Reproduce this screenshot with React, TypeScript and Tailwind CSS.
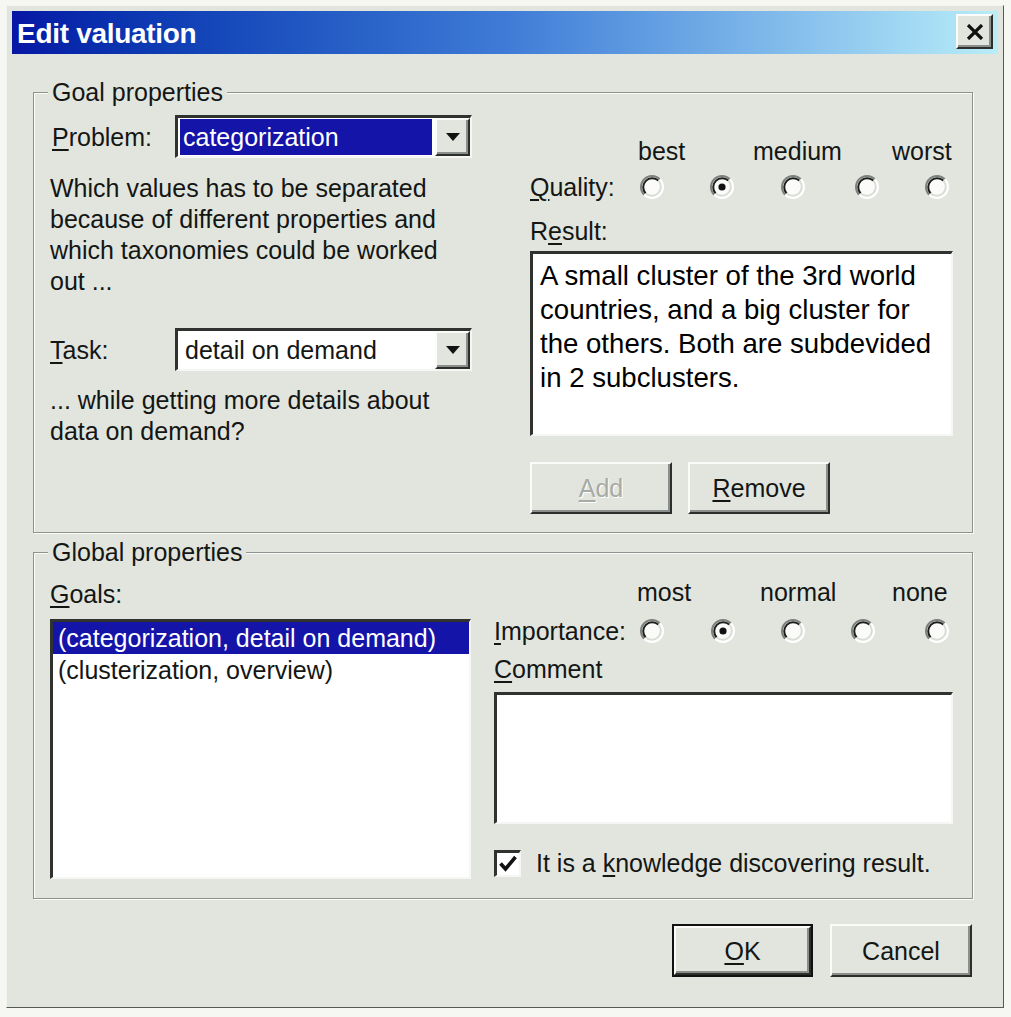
import React from 'react'

// classic win9x dialog, scaled up ~2.4x

const raised =
  'border-[2px] border-t-[#fbfcfa] border-l-[#fbfcfa] border-r-[#2c2e2c] border-b-[#2c2e2c] shadow-[inset_-2px_-2px_0_#8b8f8b] bg-[#e1e5de]'
const sunken =
  'border-t-[3px] border-l-[3px] border-r-[2px] border-b-[2px] border-t-[#2f322f] border-l-[#2f322f] border-r-[#f6f7f4] border-b-[#f6f7f4] bg-white'

function U({ children }: { children: React.ReactNode }) {
  return <span className="underline decoration-[2px] underline-offset-[3px]">{children}</span>
}

function Radio({ checked = false }: { checked?: boolean }) {
  return (
    <svg width="24" height="24" viewBox="0 0 24 24">
      <circle cx="12" cy="12" r="10.5" fill="#fbfcfa" />
      <path d="M4.22 19.78 A11 11 0 0 1 19.78 4.22" stroke="#7d817d" strokeWidth="2" fill="none" />
      <path d="M5.64 18.36 A9 9 0 0 1 18.36 5.64" stroke="#1c1e1c" strokeWidth="2" fill="none" />
      <path d="M19.78 4.22 A11 11 0 0 1 4.22 19.78" stroke="#ffffff" strokeWidth="2" fill="none" />
      <path d="M18.36 5.64 A9 9 0 0 1 5.64 18.36" stroke="#d9ddd6" strokeWidth="2" fill="none" />
      {checked && <circle cx="12" cy="12" r="3.6" fill="#111" />}
    </svg>
  )
}

function Arrow() {
  return (
    <svg width="16" height="10" viewBox="0 0 16 10">
      <path d="M1 1 H15 L8 9 Z" fill="#111" />
    </svg>
  )
}

function Combo({ value, selected = false }: { value: string; selected?: boolean }) {
  return (
    <div className={`flex h-[43px] w-[297px] ${sunken}`}>
      <div className="flex flex-1 py-[1px] pl-[2px] pr-[3px]">
        {selected ? (
          <div className="flex w-full items-center bg-[#1414a8] pl-[3px] text-white">{value}</div>
        ) : (
          <div className="flex w-full items-center pl-[5px]">{value}</div>
        )}
      </div>
      <div className={`flex w-[35px] items-center justify-center ${raised}`}>
        <Arrow />
      </div>
    </div>
  )
}

function GroupBox({ title, className, children }: { title: string; className: string; children: React.ReactNode }) {
  return (
    <div className={`border border-[#8d928d] shadow-[inset_1px_1px_0_#fbfcfa,1px_1px_0_#fbfcfa] ${className}`}>
      <div className="-mt-[15px] ml-[14px] w-fit bg-[#e1e5de] px-[4px]">{title}</div>
      {children}
    </div>
  )
}

export default function App() {
  return (
    <div className="h-[1017px] w-[1011px] bg-[#f6f7f3] pl-[6px] pt-[5px] font-['Liberation_Sans',Arial,sans-serif] text-[25px] leading-[28px] text-[#141614]">
      <div className="h-[1003px] w-[998px] border border-b-[#565a56] border-l-[#f2f4f0] border-r-[#565a56] border-t-[#f2f4f0] bg-[#e1e5de] p-[5px]">
        {/* title bar */}
        <div className="flex h-[43px] items-start justify-between bg-linear-to-r from-[#0816a4] via-[#3f7bd6] to-[#b9edf8] pl-[5px] pr-[5px] pt-[3px]">
          <span className="mt-[5px] text-[28px] font-bold leading-[30px] tracking-[-0.3px] text-white">Edit valuation</span>
          <div className={`flex h-[35px] w-[37px] items-center justify-center ${raised}`}>
            <svg width="20" height="16" viewBox="0 0 20 16">
              <path d="M3 1 L17 15 M17 1 L3 15" stroke="#111" strokeWidth="3.2" />
            </svg>
          </div>
        </div>

        <div className="pl-[21px] pr-[25px] pt-[38px]">
          {/* Goal properties */}
          <GroupBox title="Goal properties" className="h-[441px]">
            <div className="flex gap-[58px] pl-[16px]">
              <div className="w-[422px]">
                <div className="mt-[9px] flex items-center">
                  <span className="w-[125px] pl-[2px]">
                    <U>P</U>roblem:
                  </span>
                  <Combo value="categorization" selected />
                </div>
                <p className="mt-[15px] leading-[31px]">
                  Which values has to be separated
                  <br />
                  because of different properties and
                  <br />
                  which taxonomies could be worked
                  <br />
                  out ...
                </p>
                <div className="mt-[31px] flex items-center">
                  <span className="w-[125px]">
                    <U>T</U>ask:
                  </span>
                  <Combo value="detail on demand" />
                </div>
                <p className="mt-[14px] leading-[31px]">
                  ... while getting more details about
                  <br />
                  data on demand?
                </p>
              </div>

              <div className="w-[423px]">
                <div className="mt-[31px] grid h-[28px] grid-cols-[108px_115px_139px_1fr]">
                  <span />
                  <span>best</span>
                  <span>medium</span>
                  <span>worst</span>
                </div>
                <div className="mt-[8px] grid h-[28px] grid-cols-[110px_70px_71px_74px_70px_28px] items-center">
                  <span>
                    <U>Q</U>uality:
                  </span>
                  <Radio />
                  <Radio checked />
                  <Radio />
                  <Radio />
                  <Radio />
                </div>
                <div className="mt-[16px]">
                  R<U>e</U>sult:
                </div>
                <div className={`mt-[6px] h-[185px] w-[423px] pl-[7px] pt-[5px] text-[27.6px] leading-[34px] text-black ${sunken}`}>
                  A small cluster of the 3rd world
                  <br />
                  countries, and a big cluster for
                  <br />
                  the others. Both are subdevided
                  <br />
                  in 2 subclusters.
                </div>
                <div className="mt-[26px] flex gap-[16px]">
                  <div className={`flex h-[52px] w-[142px] items-center justify-center text-[#a7aba6] [text-shadow:1px_1px_0_#ffffff] ${raised}`}>
                    <U>A</U>dd
                  </div>
                  <div className={`flex h-[52px] w-[142px] items-center justify-center ${raised}`}>
                    <span>
                      <U>R</U>emove
                    </span>
                  </div>
                </div>
              </div>
            </div>
          </GroupBox>

          {/* Global properties */}
          <GroupBox title="Global properties" className="mt-[19px] h-[347px]">
            <div className="flex gap-[23px] pl-[16px]">
              <div className="w-[421px]">
                <div className="mt-[14px]">
                  <U>G</U>oals:
                </div>
                <div className={`mt-[11px] h-[260px] w-[421px] ${sunken}`}>
                  <div className="flex h-[32px] items-center bg-[#1414a8] pl-[5px] text-white">
                    (categorization, detail on demand)
                  </div>
                  <div className="flex h-[32px] items-center pl-[5px]">(clusterization, overview)</div>
                </div>
              </div>

              <div className="w-[459px]">
                <div className="mt-[12px] grid h-[28px] grid-cols-[143px_123px_132px_1fr]">
                  <span />
                  <span>most</span>
                  <span>normal</span>
                  <span>none</span>
                </div>
                <div className="mt-[11px] grid h-[28px] grid-cols-[146px_71px_70px_70px_74px_28px] items-center">
                  <span>
                    <U>I</U>mportance:
                  </span>
                  <Radio />
                  <Radio checked />
                  <Radio />
                  <Radio />
                  <Radio />
                </div>
                <div className="mt-[10px]">
                  <U>C</U>omment
                </div>
                <div className={`mt-[9px] h-[132px] w-[459px] ${sunken}`} />
                <div className="mt-[25px] flex h-[28px] items-center">
                  <div className={`flex h-[27px] w-[27px] items-center justify-center ${sunken}`}>
                    <svg width="20" height="20" viewBox="0 0 20 20">
                      <path d="M2.5 9.5 L7.5 15 L17.5 3" stroke="#111" strokeWidth="3.6" fill="none" />
                    </svg>
                  </div>
                  <span className="ml-[15px]">
                    It is a <U>k</U>nowledge discovering result.
                  </span>
                </div>
              </div>
            </div>
          </GroupBox>

          {/* dialog buttons */}
          <div className="mt-[25px] flex justify-end gap-[17px] pr-[1px]">
            <div className="h-[53px] w-[141px] border-[2px] border-[#111]">
              <div className={`flex h-full w-full items-center justify-center ${raised}`}>
                <span>
                  <U>O</U>K
                </span>
              </div>
            </div>
            <div className={`flex h-[53px] w-[142px] items-center justify-center ${raised}`}>Cancel</div>
          </div>
        </div>
      </div>
    </div>
  )
}
